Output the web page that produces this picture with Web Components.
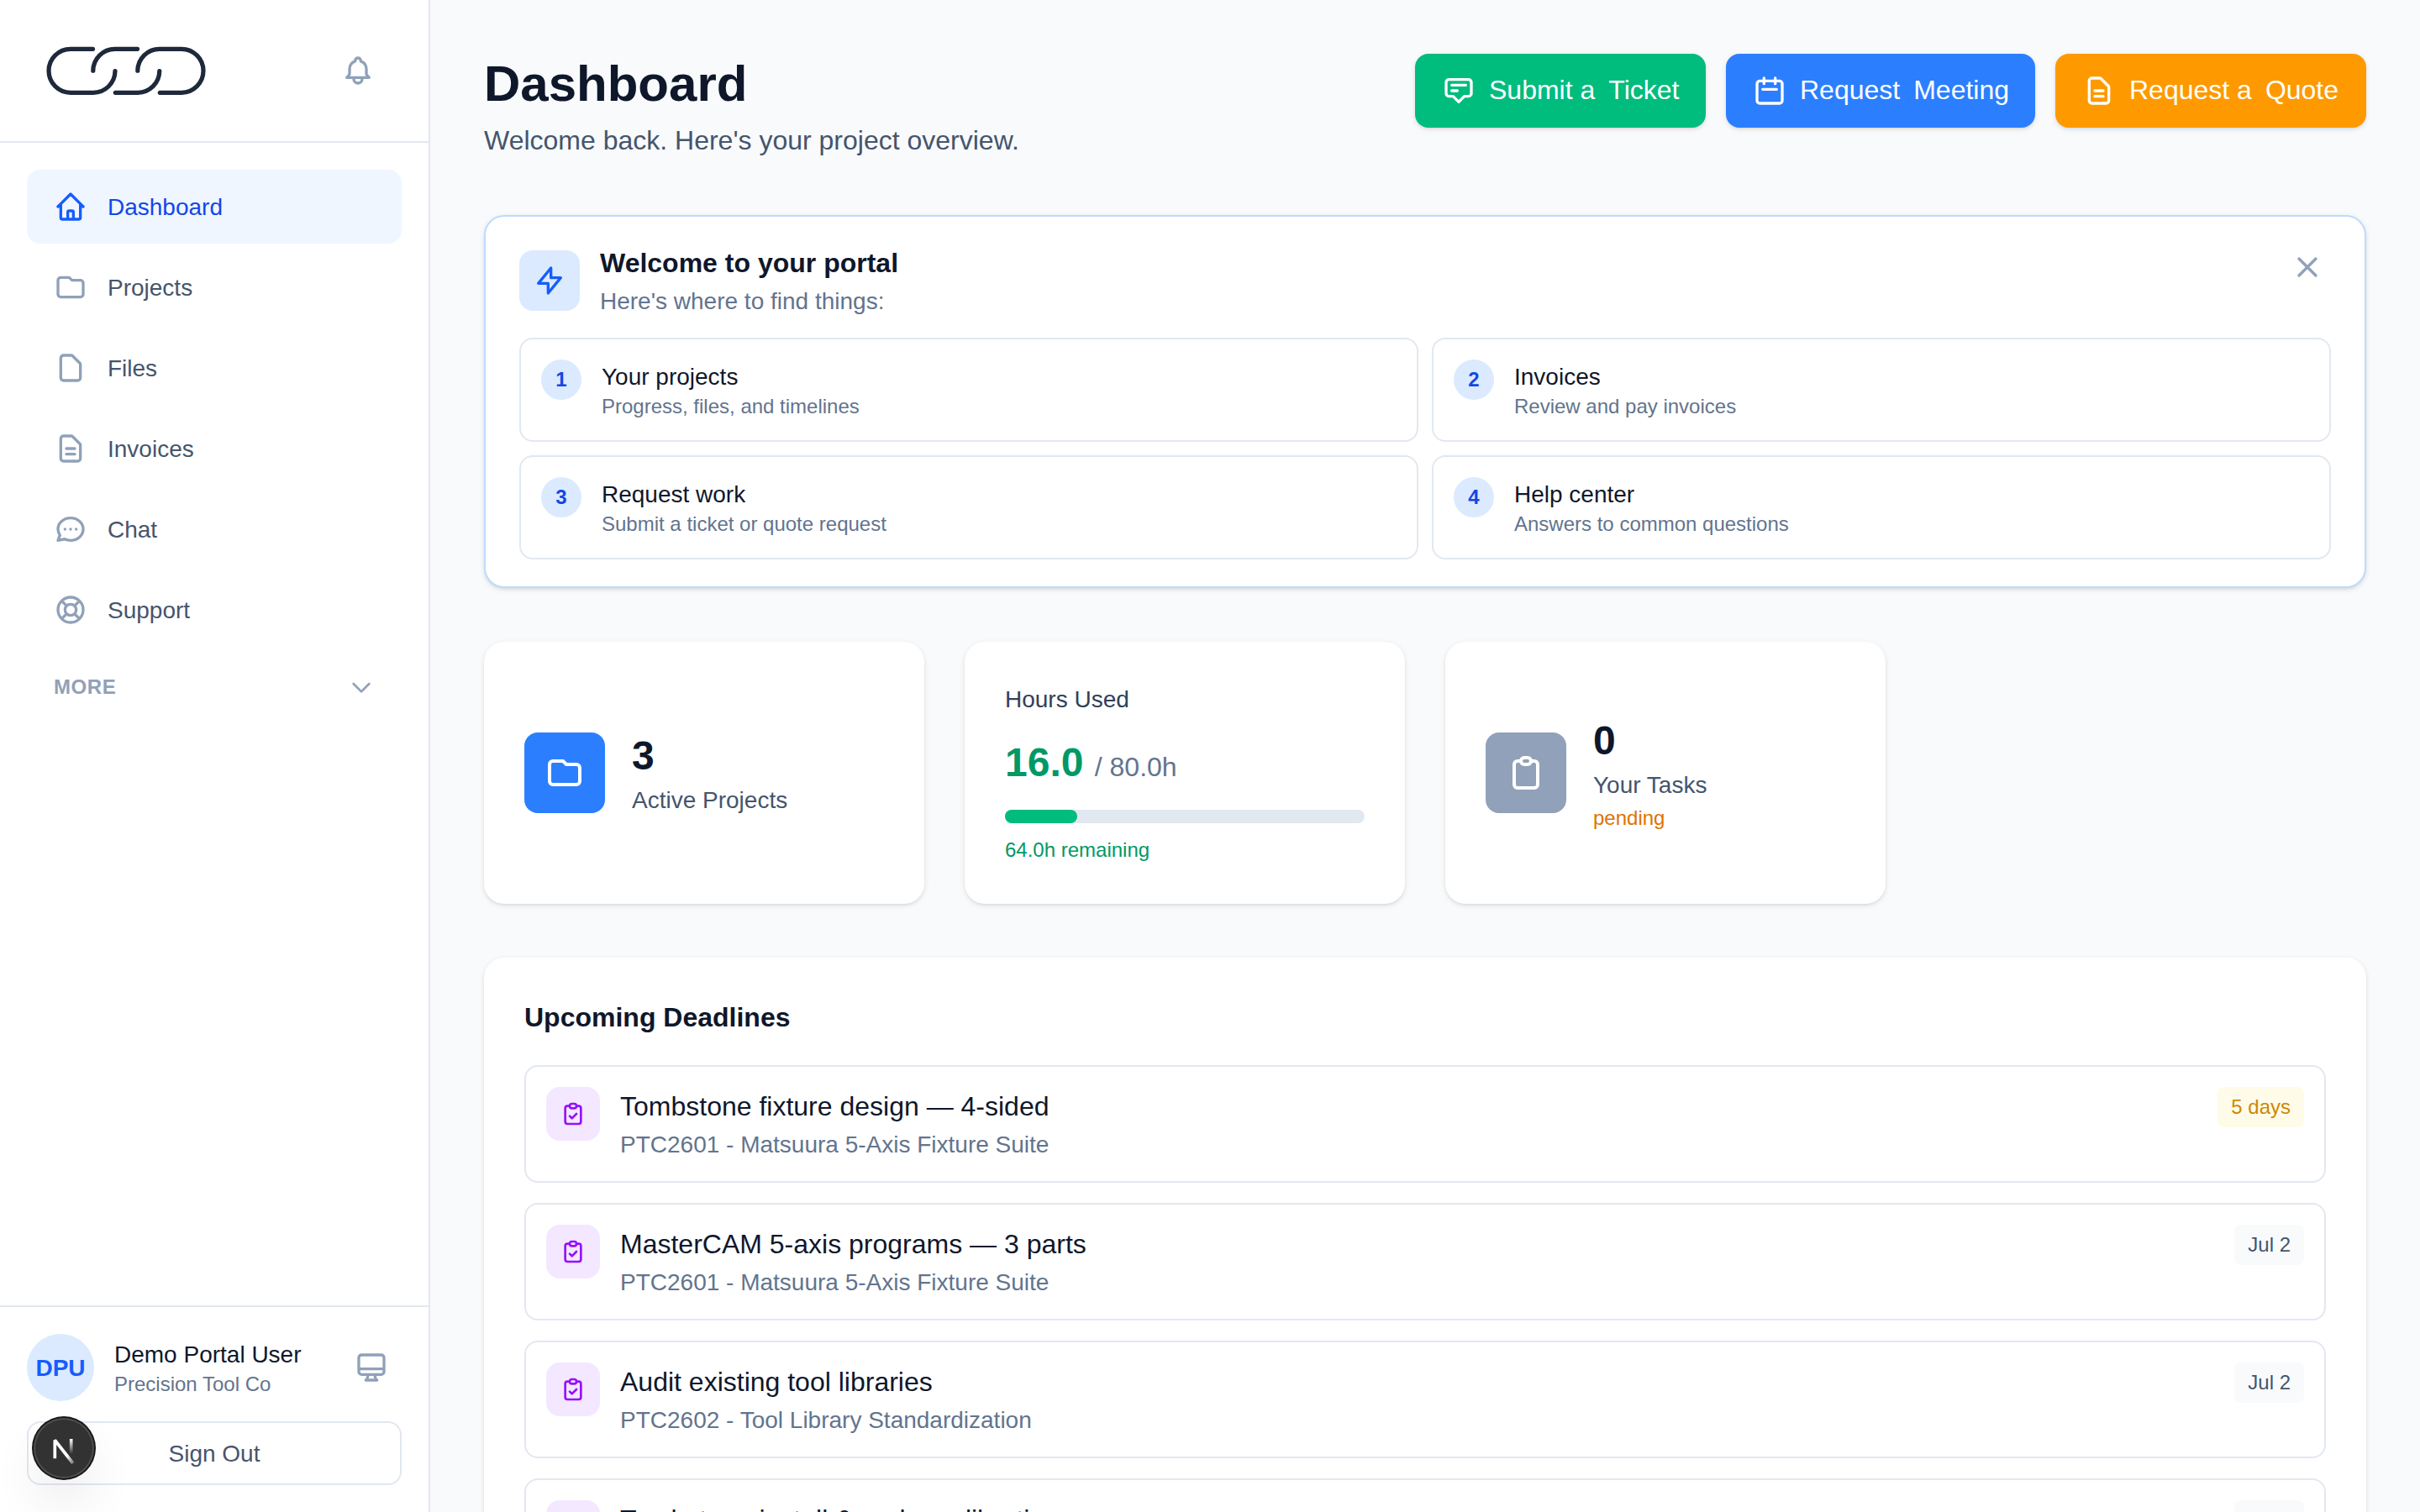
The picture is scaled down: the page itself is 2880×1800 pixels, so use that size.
<!DOCTYPE html>
<html lang="en">
<head>
<meta charset="utf-8">
<title>Dashboard</title>
<style>
  * { box-sizing: border-box; }
  body {
    margin: 0;
    height: 1800px;
    overflow: hidden;
    background: #f8fafc;
    color: #0f172b;
    font-family: "Liberation Sans", Arial, sans-serif;
    font-size: 28px;
    line-height: 40px;
  }
</style>
</head>
<body>
<portal-app></portal-app>

<script>
// stroke icons, all on a 24x24 grid
const ICONS = {
  bell: "M15 17h5l-1.405-1.405A2.032 2.032 0 0118 14.158V11a6.002 6.002 0 00-4-5.659V5a2 2 0 10-4 0v.341C7.67 6.165 6 8.388 6 11v3.159c0 .538-.214 1.055-.595 1.436L4 17h5m6 0v1a3 3 0 11-6 0v-1m6 0H9",
  home: "M3 12l2-2m0 0l7-7 7 7M5 10v10a1 1 0 001 1h3m10-11l2 2m-2-2v10a1 1 0 01-1 1h-3m-6 0a1 1 0 001-1v-4a1 1 0 011-1h2a1 1 0 011 1v4a1 1 0 001 1m-6 0h6",
  folder: "M3 7v10a2 2 0 002 2h14a2 2 0 002-2V9a2 2 0 00-2-2h-6l-2-2H5a2 2 0 00-2 2z",
  file: "M7 21h10a2 2 0 002-2V9.414a1 1 0 00-.293-.707l-5.414-5.414A1 1 0 0012.586 3H7a2 2 0 00-2 2v14a2 2 0 002 2z",
  document: "M9 12h6m-6 4h6m2 5H7a2 2 0 01-2-2V5a2 2 0 012-2h5.586a1 1 0 01.707.293l5.414 5.414a1 1 0 01.293.707V19a2 2 0 01-2 2z",
  chat: "M8 12h.01M12 12h.01M16 12h.01M21 12c0 4.418-4.03 8-9 8a9.863 9.863 0 01-4.255-.949L3 20l1.395-3.72C3.512 15.042 3 13.574 3 12c0-4.418 4.03-8 9-8s9 3.582 9 8z",
  support: "M18.364 5.636l-3.536 3.536m0 5.656l3.536 3.536M9.172 9.172L5.636 5.636m3.536 9.192l-3.536 3.536M21 12a9 9 0 11-18 0 9 9 0 0118 0zm-5 0a4 4 0 11-8 0 4 4 0 018 0z",
  chevron: "M19 9l-7 7-7-7",
  desktop: "M9.75 17L9 20l-1 1h8l-1-1-.75-3M3 13h18M5 17h14a2 2 0 002-2V5a2 2 0 00-2-2H5a2 2 0 00-2 2v10a2 2 0 002 2z",
  ticket: "M7 8h10M7 12h4m1 8l-4-4H5a2 2 0 01-2-2V6a2 2 0 012-2h14a2 2 0 012 2v8a2 2 0 01-2 2h-3l-4 4z",
  calendar: "M8 7V3m8 4V3m-9 8h10M5 21h14a2 2 0 002-2V7a2 2 0 00-2-2H5a2 2 0 00-2 2v12a2 2 0 002 2z",
  bolt: "M13 10V3L4 14h7v7l9-11h-7z",
  close: "M6 18L18 6M6 6l12 12",
  clipboard: "M9 5H7a2 2 0 00-2 2v12a2 2 0 002 2h10a2 2 0 002-2V7a2 2 0 00-2-2h-2M9 5a2 2 0 002 2h2a2 2 0 002-2M9 5a2 2 0 012-2h2a2 2 0 012 2",
  task: "M9 5H7a2 2 0 00-2 2v12a2 2 0 002 2h10a2 2 0 002-2V7a2 2 0 00-2-2h-2M9 5a2 2 0 002 2h2a2 2 0 002-2M9 5a2 2 0 012-2h2a2 2 0 012 2m-6 9l2 2 4-4"
};

// base class: attaches the shadow root and fills it with render()
// .sm and .lg are the two body sizes, each nudged onto its baseline
class PortalElement extends HTMLElement {
  constructor() {
    super();
    this.attachShadow({ mode: "open" });
  }
  connectedCallback() {
    this.shadowRoot.innerHTML = `
      <style>
        *, :host { box-sizing: border-box; }
        h1, h2, p { margin: 0; }
        .sm { margin: 1px 0 -1px; }
        .lg { margin: -1px 0 1px; font-size: 32px; line-height: 48px; }
      </style>
      ${this.render()}`;
  }
  attr(name, fallback = "") {
    return this.getAttribute(name) || fallback;
  }
}

class PortalIcon extends PortalElement {
  render() {
    const size = this.attr("size", "40");
    return `
      <style>
        :host { display: block; flex: none; width: ${size}px; height: ${size}px; }
        svg { display: block; width: 100%; height: 100%; }
      </style>
      <svg viewBox="0 0 24 24" fill="none" stroke="currentColor" stroke-width="2" stroke-linecap="round" stroke-linejoin="round">
        <path d="${ICONS[this.attr("name")]}"/>
      </svg>`;
  }
}
customElements.define("portal-icon", PortalIcon);

// rounded square with an icon in the middle
class IconTile extends PortalElement {
  render() {
    return `
      <style>
        :host {
          display: flex;
          flex: none;
          align-items: center;
          justify-content: center;
          width: ${this.attr("box")}px;
          height: ${this.attr("box")}px;
          border-radius: 16px;
          background: ${this.attr("bg")};
          color: ${this.attr("fg", "#fff")};
        }
      </style>
      <portal-icon name="${this.attr("icon")}" size="${this.attr("size", "40")}"></portal-icon>`;
  }
}
customElements.define("icon-tile", IconTile);

class NavItem extends PortalElement {
  render() {
    return `
      <style>
        :host {
          display: flex;
          align-items: center;
          gap: 24px;
          height: 88px;
          padding: 0 32px;
          border-radius: 16px;
          color: #45556c;
        }
        portal-icon { color: #90a1b9; }
        :host([active]) { background: #eff6ff; color: #1447e6; }
        :host([active]) portal-icon { color: #155dfc; }
      </style>
      <portal-icon name="${this.attr("icon")}"></portal-icon>
      <span class="sm"><slot></slot></span>`;
  }
}
customElements.define("nav-item", NavItem);

class PortalLogo extends PortalElement {
  render() {
    return `
      <style>
        :host { display: block; width: 236px; height: 104px; }
        svg { display: block; }
      </style>
      <svg width="236" height="104" viewBox="32 32 236 104" fill="none" stroke="#1e293b" stroke-width="5.2" stroke-linecap="round">
        <path d="M110.5 58.3H84A26 26 0 0 0 84 110.3H111A26 26 0 0 0 137 84.5"/>
        <path d="M163.5 58.3H137A26 26 0 0 0 110.8 84.2"/>
        <path d="M137.3 110.3H164A26 26 0 0 0 189.8 84.5"/>
        <path d="M163.8 84.2A26 26 0 0 1 190 58.3H216A26 26 0 0 1 216 110.3H190.3"/>
      </svg>`;
  }
}
customElements.define("portal-logo", PortalLogo);

// floating dev tools button in the corner
class DevBadge extends PortalElement {
  render() {
    return `
      <style>
        :host {
          position: absolute;
          left: 40px;
          bottom: 40px;
          width: 72px;
          height: 72px;
          border-radius: 50%;
          background: #323232;
          box-shadow: 0 0 0 2px #171717, inset 0 0 0 2px rgba(255, 255, 255, .14), 0 32px 64px -16px rgba(0, 0, 0, .24);
        }
        svg { display: block; }
      </style>
      <svg width="72" height="72" viewBox="0 0 72 72" fill="none">
        <defs>
          <linearGradient id="diag" x1="40" y1="45" x2="51" y2="58.6" gradientUnits="userSpaceOnUse">
            <stop stop-color="#fff"/>
            <stop offset="1" stop-color="#fff" stop-opacity="0"/>
          </linearGradient>
          <linearGradient id="stem" x1="44" y1="25" x2="44" y2="43" gradientUnits="userSpaceOnUse">
            <stop stop-color="#fff"/>
            <stop offset="1" stop-color="#fff" stop-opacity="0"/>
          </linearGradient>
        </defs>
        <path d="M25.3 48.2V26.5L46.8 54" stroke="url(#diag)" stroke-width="3.7" stroke-linejoin="bevel"/>
        <path d="M44.7 25v23" stroke="url(#stem)" stroke-width="3.7"/>
      </svg>`;
  }
}
customElements.define("dev-badge", DevBadge);

class SideBar extends PortalElement {
  render() {
    return `
      <style>
        :host {
          position: relative;
          display: flex;
          flex: none;
          flex-direction: column;
          width: 512px;
          height: 1800px;
          background: #fff;
          border-right: 2px solid #e2e8f0;
        }
        header {
          display: flex;
          align-items: center;
          justify-content: space-between;
          height: 170px;
          padding: 0 64px 0 32px;
          border-bottom: 2px solid #e2e8f0;
          color: #90a1b9;
        }
        nav {
          display: flex;
          flex: 1;
          flex-direction: column;
          gap: 8px;
          padding: 32px;
        }
        .more {
          display: flex;
          align-items: center;
          justify-content: space-between;
          height: 80px;
          padding: 0 32px;
          color: #90a1b9;
          font-size: 24px;
          font-weight: bold;
          line-height: 32px;
          letter-spacing: .025em;
        }
        footer {
          padding: 32px;
          border-top: 2px solid #e2e8f0;
        }
        .user {
          display: flex;
          align-items: center;
          gap: 24px;
          padding-right: 16px;
          color: #90a1b9;
        }
        .avatar {
          display: flex;
          align-items: center;
          justify-content: center;
          width: 80px;
          height: 80px;
          border-radius: 50%;
          background: #dbeafe;
          color: #155dfc;
          font-weight: bold;
        }
        .who { display: flex; flex: 1; flex-direction: column; }
        .name { color: #0f172b; }
        .company { color: #62748e; font-size: 24px; line-height: 32px; }
        .signout {
          display: flex;
          align-items: center;
          justify-content: center;
          height: 76px;
          margin-top: 24px;
          border: 2px solid #e2e8f0;
          border-radius: 16px;
          color: #45556c;
        }
      </style>
      <header>
        <portal-logo></portal-logo>
        <portal-icon name="bell"></portal-icon>
      </header>
      <nav>
        <nav-item icon="home" active>Dashboard</nav-item>
        <nav-item icon="folder">Projects</nav-item>
        <nav-item icon="file">Files</nav-item>
        <nav-item icon="document">Invoices</nav-item>
        <nav-item icon="chat">Chat</nav-item>
        <nav-item icon="support">Support</nav-item>
        <div class="more"><span>MORE</span><portal-icon name="chevron" size="32"></portal-icon></div>
      </nav>
      <footer>
        <div class="user">
          <div class="avatar"><span class="sm">DPU</span></div>
          <div class="who">
            <p class="name sm">Demo Portal User</p>
            <p class="company">Precision Tool Co</p>
          </div>
          <portal-icon name="desktop"></portal-icon>
        </div>
        <div class="signout"><span class="sm">Sign Out</span></div>
      </footer>
      <dev-badge></dev-badge>`;
  }
}
customElements.define("side-bar", SideBar);

class ActionButton extends PortalElement {
  render() {
    return `
      <style>
        :host {
          display: flex;
          align-items: center;
          gap: 16px;
          width: ${this.attr("width")}px;
          height: 88px;
          padding-left: 32px;
          border-radius: 16px;
          background: ${this.attr("bg")};
          color: #fff;
          font-size: 32px;
          line-height: 48px;
          white-space: nowrap;
          box-shadow: 0 2px 6px rgba(0, 0, 0, .1), 0 2px 4px -2px rgba(0, 0, 0, .1);
        }
        ::slotted(span) { margin: -1px 0 1px; }
      </style>
      <portal-icon name="${this.attr("icon")}"></portal-icon>
      <slot></slot>`;
  }
}
customElements.define("action-button", ActionButton);

class GuideStep extends PortalElement {
  render() {
    return `
      <style>
        :host {
          display: flex;
          gap: 24px;
          padding: 24px;
          border: 2px solid #e2e8f0;
          border-radius: 16px;
          background: #fff;
          color: #0f172b;
        }
        .num {
          display: flex;
          flex: none;
          align-items: center;
          justify-content: center;
          width: 48px;
          height: 48px;
          border-radius: 50%;
          background: #dbeafe;
          color: #1447e6;
          font-size: 24px;
          font-weight: bold;
          line-height: 32px;
        }
        .body { display: flex; flex-direction: column; }
        .text { color: #62748e; font-size: 24px; line-height: 32px; }
      </style>
      <span class="num">${this.attr("num")}</span>
      <div class="body">
        <p class="sm">${this.attr("heading")}</p>
        <p class="text"><slot></slot></p>
      </div>`;
  }
}
customElements.define("guide-step", GuideStep);

class WelcomeCard extends PortalElement {
  render() {
    return `
      <style>
        :host {
          display: block;
          padding: 32px 40px;
          border: 2px solid #bedbff;
          border-radius: 24px;
          background: #fff;
          box-shadow: 0 2px 6px rgba(0, 0, 0, .1), 0 2px 4px -2px rgba(0, 0, 0, .1);
        }
        .top {
          display: flex;
          align-items: center;
          gap: 24px;
        }
        .intro { display: flex; flex: 1; flex-direction: column; color: #62748e; }
        h2 { color: #0f172b; }
        .close { align-self: flex-start; padding: 8px; color: #90a1b9; }
        .steps {
          display: grid;
          grid-template-columns: 1fr 1fr;
          gap: 16px;
          margin-top: 24px;
        }
      </style>
      <div class="top">
        <icon-tile icon="bolt" box="72" bg="#dbeafe" fg="#155dfc"></icon-tile>
        <div class="intro">
          <h2 class="lg">Welcome to your portal</h2>
          <p class="sm">Here's where to find things:</p>
        </div>
        <div class="close"><portal-icon name="close"></portal-icon></div>
      </div>
      <div class="steps"><slot></slot></div>`;
  }
}
customElements.define("welcome-card", WelcomeCard);

class StatCard extends PortalElement {
  render() {
    return `
      <style>
        :host {
          display: flex;
          align-items: center;
          gap: 32px;
          height: 312px;
          padding: 48px;
          border-radius: 24px;
          background: #fff;
          box-shadow: 0 2px 6px rgba(0, 0, 0, .1), 0 2px 4px -2px rgba(0, 0, 0, .1);
        }
        .body { display: flex; flex-direction: column; }
        .value { font-size: 48px; font-weight: bold; line-height: 64px; }
        .label { color: #45556c; }
        .note { margin-top: 4px; color: #e17100; font-size: 24px; line-height: 32px; }
      </style>
      <icon-tile icon="${this.attr("icon")}" box="96" size="48" bg="${this.attr("bg")}"></icon-tile>
      <div class="body">
        <p class="value">${this.attr("value")}</p>
        <p class="label sm"><slot></slot></p>
        ${this.hasAttribute("note") ? `<p class="note">${this.attr("note")}</p>` : ""}
      </div>`;
  }
}
customElements.define("stat-card", StatCard);

class HoursCard extends PortalElement {
  render() {
    const used = Number(this.attr("used"));
    const total = Number(this.attr("total"));
    return `
      <style>
        :host {
          display: flex;
          flex-direction: column;
          height: 312px;
          padding: 48px;
          border-radius: 24px;
          background: #fff;
          box-shadow: 0 2px 6px rgba(0, 0, 0, .1), 0 2px 4px -2px rgba(0, 0, 0, .1);
        }
        .label { color: #314158; }
        .value {
          margin-top: 24px;
          color: #009966;
          font-size: 48px;
          font-weight: bold;
          line-height: 64px;
        }
        .value span { color: #62748e; font-size: 32px; font-weight: normal; line-height: 1; }
        .bar { height: 16px; margin: 24px 0 16px; border-radius: 8px; background: #e2e8f0; }
        .fill { width: ${used / total * 100}%; height: 16px; border-radius: 8px; background: #00bc7d; }
        .left { color: #009966; font-size: 24px; line-height: 32px; }
      </style>
      <p class="label sm">Hours Used</p>
      <p class="value">${used.toFixed(1)} <span>/ ${total.toFixed(1)}h</span></p>
      <div class="bar"><div class="fill"></div></div>
      <p class="left">${(total - used).toFixed(1)}h remaining</p>`;
  }
}
customElements.define("hours-card", HoursCard);

class DeadlineRow extends PortalElement {
  render() {
    return `
      <style>
        :host {
          display: flex;
          align-items: flex-start;
          gap: 24px;
          height: 140px;
          padding: 24px;
          border: 2px solid #e2e8f0;
          border-radius: 16px;
        }
        .body { display: flex; flex: 1; flex-direction: column; }
        .project { color: #62748e; }
        .due {
          padding: 8px 16px;
          border-radius: 8px;
          background: #f8fafc;
          color: #45556c;
          font-size: 24px;
          line-height: 32px;
        }
        :host([soon]) .due { background: #fefce8; color: #d08700; }
      </style>
      <icon-tile icon="task" box="64" size="32" bg="#f3e8ff" fg="#9810fa"></icon-tile>
      <div class="body">
        <p class="lg"><slot></slot></p>
        <p class="project sm">${this.attr("project")}</p>
      </div>
      <span class="due">${this.attr("due")}</span>`;
  }
}
customElements.define("deadline-row", DeadlineRow);

class DeadlineList extends PortalElement {
  render() {
    return `
      <style>
        :host {
          display: flex;
          flex-direction: column;
          gap: 24px;
          padding: 48px;
          border-radius: 24px;
          background: #fff;
          box-shadow: 0 2px 6px rgba(0, 0, 0, .1), 0 2px 4px -2px rgba(0, 0, 0, .1);
        }
        .lg { margin-bottom: 9px; }
      </style>
      <h2 class="lg">Upcoming Deadlines</h2>
      <slot></slot>`;
  }
}
customElements.define("deadline-list", DeadlineList);

class PortalApp extends PortalElement {
  render() {
    return `
      <style>
        :host { display: flex; align-items: flex-start; height: 1800px; overflow: hidden; }
        main {
          display: flex;
          flex: 1;
          flex-direction: column;
          gap: 64px;
          padding: 64px;
        }
        header { display: flex; align-items: flex-start; justify-content: space-between; height: 128px; }
        h1 { font-size: 60px; line-height: 72px; }
        .sub { margin-top: 7px; color: #45556c; }
        .actions { display: flex; gap: 24px; }
        .stats { display: grid; grid-template-columns: repeat(4, 1fr); gap: 48px; }
      </style>
      <side-bar></side-bar>
      <main>
        <header>
          <div>
            <h1>Dashboard</h1>
            <p class="lg sub">Welcome back. Here's your project overview.</p>
          </div>
          <div class="actions">
            <action-button icon="ticket" bg="#00bc7d" width="346"><span>Submit a</span><span>Ticket</span></action-button>
            <action-button icon="calendar" bg="#2b7fff" width="368"><span>Request</span><span>Meeting</span></action-button>
            <action-button icon="document" bg="#fe9a00" width="370"><span>Request a</span><span>Quote</span></action-button>
          </div>
        </header>
        <welcome-card>
          <guide-step num="1" heading="Your projects">Progress, files, and timelines</guide-step>
          <guide-step num="2" heading="Invoices">Review and pay invoices</guide-step>
          <guide-step num="3" heading="Request work">Submit a ticket or quote request</guide-step>
          <guide-step num="4" heading="Help center">Answers to common questions</guide-step>
        </welcome-card>
        <div class="stats">
          <stat-card icon="folder" bg="#2b7fff" value="3">Active Projects</stat-card>
          <hours-card used="16" total="80"></hours-card>
          <stat-card icon="clipboard" bg="#90a1b9" value="0" note="pending">Your Tasks</stat-card>
        </div>
        <deadline-list>
          <deadline-row project="PTC2601 - Matsuura 5-Axis Fixture Suite" due="5 days" soon>Tombstone fixture design — 4-sided</deadline-row>
          <deadline-row project="PTC2601 - Matsuura 5-Axis Fixture Suite" due="Jul 2">MasterCAM 5-axis programs — 3 parts</deadline-row>
          <deadline-row project="PTC2602 - Tool Library Standardization" due="Jul 2">Audit existing tool libraries</deadline-row>
          <deadline-row project="PTC2601 - Matsuura 5-Axis Fixture Suite" due="Jul 2">Tombstone install &amp; probe calibration</deadline-row>
        </deadline-list>
      </main>`;
  }
}
customElements.define("portal-app", PortalApp);
</script>
</body>
</html>
